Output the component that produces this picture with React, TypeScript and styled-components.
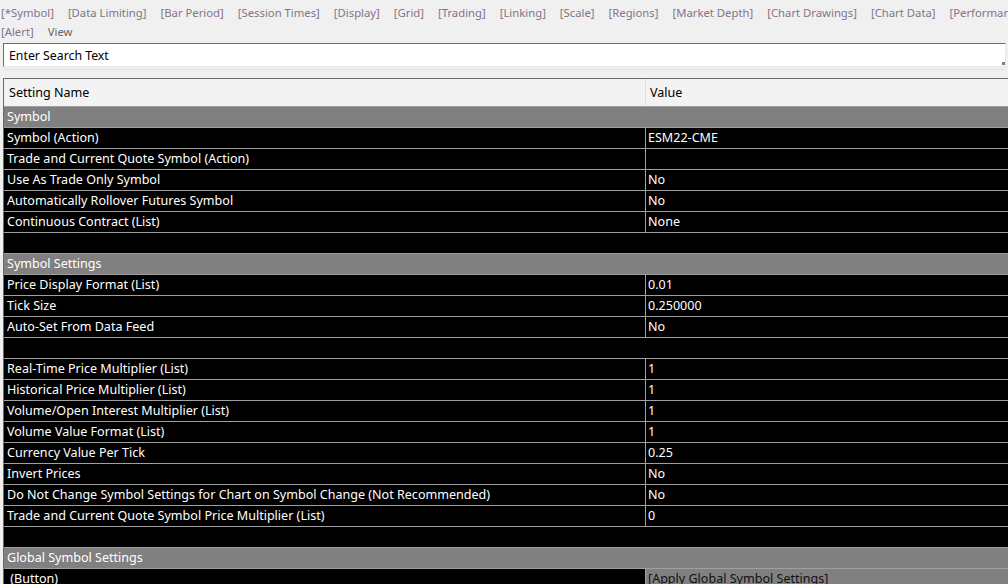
import React from 'react';
import styled, {createGlobalStyle} from 'styled-components';

const GlobalStyle = createGlobalStyle`
    html, body {
        margin: 0;
        padding: 0;
        background: #f0f0f0;
        overflow: hidden;
    }
    body {
        font-family: "Noto Sans", "Open Sans", "DejaVu Sans", sans-serif;
        font-size: 12.55px;
    }
`;

interface Setting {
    kind: 'section' | 'item' | 'blank';
    name?: string;
    value?: string;
    button?: boolean;
}

const tabs = [
    '[*Symbol]', '[Data Limiting]', '[Bar Period]', '[Session Times]', '[Display]', '[Grid]',
    '[Trading]', '[Linking]', '[Scale]', '[Regions]', '[Market Depth]', '[Chart Drawings]',
    '[Chart Data]', '[Performance]',
];

const settings: Setting[] = [
    {kind: 'section', name: 'Symbol'},
    {kind: 'item', name: 'Symbol (Action)', value: 'ESM22-CME'},
    {kind: 'item', name: 'Trade and Current Quote Symbol (Action)', value: ''},
    {kind: 'item', name: 'Use As Trade Only Symbol', value: 'No'},
    {kind: 'item', name: 'Automatically Rollover Futures Symbol', value: 'No'},
    {kind: 'item', name: 'Continuous Contract (List)', value: 'None'},
    {kind: 'blank'},
    {kind: 'section', name: 'Symbol Settings'},
    {kind: 'item', name: 'Price Display Format (List)', value: '0.01'},
    {kind: 'item', name: 'Tick Size', value: '0.250000'},
    {kind: 'item', name: 'Auto-Set From Data Feed', value: 'No'},
    {kind: 'blank'},
    {kind: 'item', name: 'Real-Time Price Multiplier (List)', value: '1'},
    {kind: 'item', name: 'Historical Price Multiplier (List)', value: '1'},
    {kind: 'item', name: 'Volume/Open Interest Multiplier (List)', value: '1'},
    {kind: 'item', name: 'Volume Value Format (List)', value: '1'},
    {kind: 'item', name: 'Currency Value Per Tick', value: '0.25'},
    {kind: 'item', name: 'Invert Prices', value: 'No'},
    {kind: 'item', name: 'Do Not Change Symbol Settings for Chart on Symbol Change (Not Recommended)', value: 'No'},
    {kind: 'item', name: 'Trade and Current Quote Symbol Price Multiplier (List)', value: '0'},
    {kind: 'blank'},
    {kind: 'section', name: 'Global Symbol Settings'},
    {kind: 'item', name: ' (Button)', value: '[Apply Global Symbol Settings]', button: true},
];

const Page = styled.div`
    width: 1008px;
    height: 584px;
    overflow: hidden;
`;

const TabBar = styled.div`
    display: flex;
    flex-direction: column;
    padding-top: 3px;
`;

const TabRow = styled.div`
    display: flex;
    gap: 14px;
    height: 19px;
    line-height: 19px;
    font-size: 11.3px;
    white-space: nowrap;
    overflow: hidden;
    padding-left: 1px;
`;

const Tab = styled.span<{ $plain?: boolean }>`
    color: ${p => (p.$plain ? '#666' : '#85738a')};
    flex-shrink: 0;
`;

const SearchWrap = styled.div`
    position: relative;
    margin: 2px 2px 0 3px;
    padding-bottom: 2px;
    border-bottom: 1px solid #e3e3e3;
`;

const SearchInput = styled.input`
    display: block;
    box-sizing: border-box;
    width: 100%;
    height: 24px;
    margin: 0;
    padding: 0 5px;
    font: inherit;
    font-size: 12.3px;
    color: #000;
    background: #fff;
    border-style: solid;
    border-width: 1px;
    border-color: #6a6a6a #e8e8e8 #e8e8e8 #6a6a6a;
    outline: none;
`;

const Grip = styled.div`
    position: absolute;
    right: 1px;
    bottom: 4px;
    width: 3px;
    height: 3px;
    background: #7a7a7a;
`;

const Table = styled.div`
    margin: 8px 0 0 3px;
    width: 1010px;
    border-top: 1px solid #6a6a6a;
    border-left: 1px solid #6a6a6a;
    color: #fff;
`;

const HeaderRow = styled.div`
    display: grid;
    grid-template-columns: 641px 1fr;
    height: 27px;
    line-height: 27px;
    background: #f3f3f3;
    color: #000;
    border-bottom: 1px solid #a0a0a0;
`;

const HeaderCell = styled.div<{ $divider?: boolean }>`
    padding-left: ${p => (p.$divider ? '4px' : '5px')};
    border-left: ${p => (p.$divider ? '1px solid #e0e0e0' : 'none')};
`;

const Row = styled.div<{ $kind: Setting['kind'] }>`
    display: grid;
    grid-template-columns: 641px 1fr;
    height: 20px;
    line-height: 20px;
    background: ${p => (p.$kind === 'section' ? '#808080' : '#000')};
    border-bottom: 1px solid #a0a0a0;
    white-space: pre;
`;

const NameCell = styled.div<{ $wide?: boolean }>`
    padding-left: 3px;
    grid-column: ${p => (p.$wide ? '1 / span 2' : 'auto')};
    overflow: hidden;
`;

const ValueCell = styled.div<{ $button?: boolean }>`
    padding-left: 2px;
    border-left: 1px solid #a0a0a0;
    background: ${p => (p.$button ? '#808080' : 'transparent')};
    color: ${p => (p.$button ? '#111' : '#fff')};
`;

const SettingRow = ({setting}: { setting: Setting }) => {
    if (setting.kind === 'section') {
        return (
            <Row $kind="section">
                <NameCell $wide>{setting.name}</NameCell>
            </Row>
        );
    }
    if (setting.kind === 'blank') {
        return <Row $kind="blank"/>;
    }
    return (
        <Row $kind="item">
            <NameCell>{setting.name}</NameCell>
            <ValueCell $button={setting.button}>{setting.value}</ValueCell>
        </Row>
    );
};

export default function App() {
    return (
        <Page>
            <GlobalStyle/>
            <TabBar>
                <TabRow>
                    {tabs.map(t => <Tab key={t}>{t}</Tab>)}
                </TabRow>
                <TabRow>
                    <Tab>[Alert]</Tab>
                    <Tab $plain>View</Tab>
                </TabRow>
            </TabBar>
            <SearchWrap>
                <SearchInput defaultValue="Enter Search Text"/>
                <Grip/>
            </SearchWrap>
            <Table>
                <HeaderRow>
                    <HeaderCell>Setting Name</HeaderCell>
                    <HeaderCell $divider>Value</HeaderCell>
                </HeaderRow>
                {settings.map((s, i) => <SettingRow key={i} setting={s}/>)}
            </Table>
        </Page>
    );
}
